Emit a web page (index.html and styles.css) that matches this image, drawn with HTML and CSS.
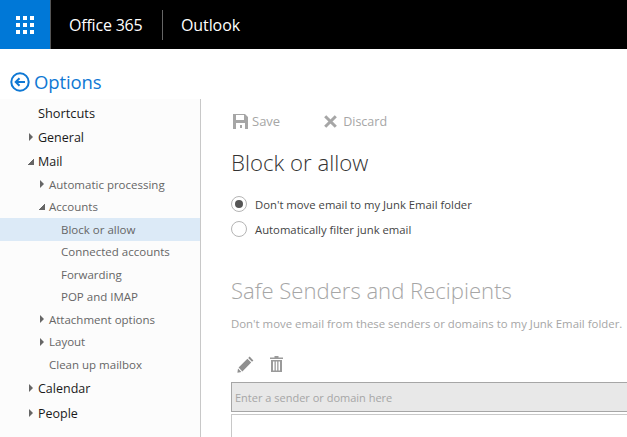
FILE: index.html
```html
<!DOCTYPE html>
<html lang="en">
<head>
<meta charset="utf-8">
<title>Options</title>
<link rel="stylesheet" href="styles.css">
</head>
<body>
<header class="topbar">
  <div class="tile">
    <svg class="waffle" width="18" height="18" viewBox="0 0 18 18" fill="#fff"><rect x="0" y="0" width="4" height="4"/><rect x="7" y="0" width="4" height="4"/><rect x="14" y="0" width="4" height="4"/><rect x="0" y="7" width="4" height="4"/><rect x="7" y="7" width="4" height="4"/><rect x="14" y="7" width="4" height="4"/><rect x="0" y="14" width="4" height="4"/><rect x="7" y="14" width="4" height="4"/><rect x="14" y="14" width="4" height="4"/></svg>
  </div>
  <div class="brand">Office 365</div>
  <div class="app">Outlook</div>
</header>
<div class="titlebar">
  <svg class="back" width="20" height="20" viewBox="0 0 20 20" fill="none" stroke="#0f78d4"><circle cx="10" cy="10" r="8.7" stroke-width="2"/><path d="M15 10H6M9.5 6.200 5.700 10l3.800 3.800" stroke-width="2"/></svg>
  <span class="title">Options</span>
</div>
<div class="main">
  <nav class="nav">
    <div class="top first"><span class="label">Shortcuts</span></div>
    <div class="top"><span class="tri closed"></span><span class="label">General</span></div>
    <div class="top mail"><span class="tri open"></span><span class="label">Mail</span></div>
    <div class="sub"><span class="tri closed"></span><span>Automatic processing</span></div>
    <div class="sub"><span class="tri open"></span><span>Accounts</span></div>
    <div class="leaf selected">Block or allow</div>
    <div class="leaf">Connected accounts</div>
    <div class="leaf">Forwarding</div>
    <div class="leaf">POP and IMAP</div>
    <div class="sub"><span class="tri closed"></span><span>Attachment options</span></div>
    <div class="sub"><span class="tri closed"></span><span>Layout</span></div>
    <div class="sub"><span class="tri none"></span><span>Clean up mailbox</span></div>
    <div class="top cal"><span class="tri closed"></span><span class="label">Calendar</span></div>
    <div class="top"><span class="tri closed"></span><span class="label">People</span></div>
  </nav>
  <main class="content">
    <div class="actions">
      <span class="action save">
        <svg width="15" height="15" viewBox="0 0 15 15" fill="#a6a6a6"><path d="M0 0h12l3 3v12H0zM3 1v5h8V1zM3 9v6h9V9zM7 11h2v3H7z" fill-rule="evenodd"/></svg>
        Save
      </span>
      <span class="action discard">
        <svg width="13" height="13" viewBox="0 0 13 13" fill="none" stroke="#a6a6a6" stroke-width="3"><path d="M1.200 1.200l10.600 10.600M11.800 1.200 1.200 11.800"/></svg>
        Discard
      </span>
    </div>
    <h1 class="heading">Block or allow</h1>
    <div class="radios">
      <div class="radio"><span class="dot checked"></span><span>Don't move email to my Junk Email folder</span></div>
      <div class="radio"><span class="dot"></span><span>Automatically filter junk email</span></div>
    </div>
    <h2 class="section">Safe Senders and Recipients</h2>
    <p class="hint">Don't move email from these senders or domains to my Junk Email folder.</p>
    <div class="tools">
      <svg width="17" height="17" viewBox="0 0 17 17" fill="#8f8f8f"><path d="M12.600 0.600 16.400 4.400 15 5.800 11.200 2zM10.400 2.800 14.200 6.600 5.400 15.400 1.600 11.600zM1 12.600 4.400 16 0.400 16.800z"/></svg>
      <svg width="13" height="16" viewBox="0 0 13 16" fill="#9a9a9a"><path d="M4.500 0h4v1.500H13V3H0V1.500h4.500zM1 4h11v12H1zM3 5.500v9h1.500v-9zM5.800 5.500v9h1.400v-9zM8.500 5.500v9H10v-9z" fill-rule="evenodd"/></svg>
    </div>
    <div class="input">Enter a sender or domain here</div>
    <div class="listbox"></div>
  </main>
</div>
</body>
</html>
```
FILE: styles.css
```css
html, body {
  margin: 0;
  padding: 0;
  height: 100%;
  overflow: hidden;
  background: #fff;
}
body {
  font-family: "Open Sans", "Noto Sans", sans-serif;
  color: #333;
}
.topbar {
  display: flex;
  align-items: center;
  height: 49px;
  background: #000;
  color: #fff;
}
.tile {
  display: flex;
  align-items: center;
  justify-content: center;
  width: 50px;
  height: 49px;
  background: #0078d7;
  border-right: 1px solid #555;
}
.brand {
  margin-left: 18px;
  padding-right: 18px;
  width: 75px;
  font-size: 16px;
  line-height: 30px;
  letter-spacing: -0.2px;
  border-right: 1px solid #666;
}
.app {
  margin-left: 18px;
  font-size: 16px;
  letter-spacing: -0.1px;
}
.titlebar {
  display: flex;
  align-items: center;
  box-sizing: border-box;
  height: 50px;
  padding: 15px 0 0 10px;
  gap: 4px;
}
.title {
  font-size: 18.500px;
  color: #0f78d4;
  letter-spacing: -0.1px;
}
.main {
  display: flex;
  height: 338px;
}
.nav {
  flex: none;
  width: 200px;
  border-right: 1px solid #c8c8c8;
  background: #fcfcfc;
  font-size: 11.500px;
  color: #666;
}
.nav div {
  display: flex;
  align-items: center;
  height: 22.500px;
}
.top {
  padding-left: 28px;
  font-size: 12.500px;
  color: #1a1a1a;
  font-weight: 500;
}
.top.first {
  margin-top: 3px;
  font-size: 12.800px;
}
.top + .top {
  margin-top: 1.500px;
}
.nav .top.mail {
  margin-top: 2px;
}
.nav .top.cal {
  margin-top: 1.500px;
}
.nav .top.cal + .top {
  margin-top: 2.500px;
}
.sub {
  padding-left: 39px;
}
.leaf {
  padding-left: 61px;
}
.leaf.selected {
  background: #dceaf7;
}
.first .label {
  margin-left: 10px;
}
.tri {
  flex: none;
  width: 0;
  height: 0;
}
.tri.closed {
  margin-left: 1px;
  margin-right: 5px;
  border-left: 4px solid #666;
  border-top: 4px solid transparent;
  border-bottom: 4px solid transparent;
}
.tri.open {
  width: 6px;
  height: 6px;
  background: linear-gradient(135deg, transparent 50%, #666 50%);
  margin-right: 4px;
}
.tri.none {
  width: 6px;
  margin-right: 4px;
}
.content {
  flex: 1;
  min-width: 0;
  padding-left: 30px;
}
.actions {
  display: flex;
  align-items: center;
  gap: 44px;
  height: 44px;
  padding-left: 2px;
  font-size: 13px;
  color: #a6a6a6;
}
.action {
  display: flex;
  align-items: center;
  gap: 4px;
}
.discard {
  gap: 6px;
  font-size: 12.500px;
}
.heading {
  margin: 5px 0 0;
  font-size: 22.200px;
  font-weight: 300;
  line-height: 30px;
  color: #333;
}
.radios {
  margin-top: 13.500px;
  font-size: 11.300px;
  color: #444;
}
.radio {
  display: flex;
  align-items: center;
  gap: 8px;
  height: 25px;
}
.dot {
  flex: none;
  width: 14px;
  height: 14px;
  border: 1px solid #b5b5b5;
  border-radius: 50%;
  position: relative;
}
.dot.checked::after {
  content: "";
  position: absolute;
  top: 3px;
  left: 3px;
  width: 8px;
  height: 8px;
  border-radius: 50%;
  background: #555;
}
.section {
  margin: 33.500px 0 0;
  font-size: 22.100px;
  font-weight: 300;
  line-height: 30px;
  color: #a6a6a6;
}
.hint {
  margin: 11px 0 0;
  font-size: 11.400px;
  line-height: 16px;
  color: #a6a6a6;
  white-space: nowrap;
}
.tools {
  display: flex;
  align-items: center;
  gap: 16px;
  height: 24px;
  margin-top: 20px;
  padding-left: 6px;
}
.input {
  display: flex;
  align-items: center;
  box-sizing: border-box;
  height: 30px;
  margin-top: 6px;
  padding-left: 3px;
  background: #e8e8e8;
  border: 1px solid #a6a6a6;
  border-width: 1px 0 1px 1px;
  font-size: 11px;
  color: #a6a6a6;
}
.listbox {
  height: 40px;
  margin-top: 2px;
  border-top: 1px solid #c8c8c8;
  border-left: 1px solid #c8c8c8;
}
```
